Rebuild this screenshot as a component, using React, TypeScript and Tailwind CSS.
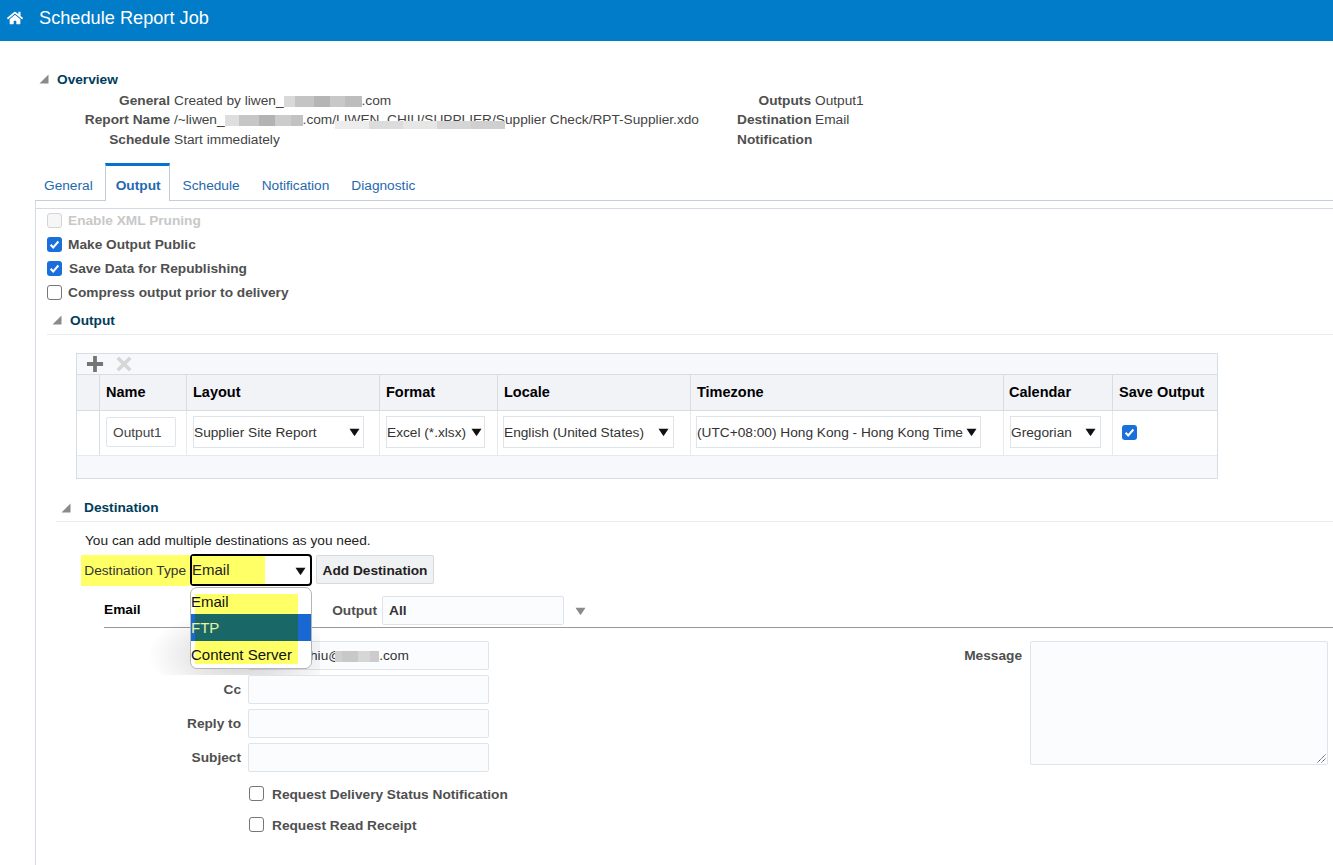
import type { ReactNode } from "react";
import { FaHome } from "react-icons/fa";

const FONT = "font-['Liberation_Sans',Arial,sans-serif]";

function SectionArrow() {
  return (
    <svg width="10" height="10" viewBox="0 0 10 10" className="shrink-0">
      <polygon points="9.5,0.5 9.5,9.5 0.5,9.5" fill="#8a8a8a" />
    </svg>
  );
}

function Caret({ color = "#111" }: { color?: string }) {
  return (
    <svg width="11" height="8" viewBox="0 0 11 8" className="shrink-0">
      <path d="M0.5 0.8h10L6 7.6a.6.6 0 0 1-1 0z" fill={color} />
    </svg>
  );
}

function Smudge({ cells }: { cells: [number, string][] }) {
  return (
    <span className="inline-flex h-[11px] align-[-2px]">
      {cells.map(([w, c], i) => (
        <span key={i} className="block h-full" style={{ width: w, background: c }} />
      ))}
    </span>
  );
}

function Checkbox({ state = "off" }: { state?: "on" | "off" | "disabled" }) {
  if (state === "on") {
    return (
      <span className="flex h-[15px] w-[15px] shrink-0 items-center justify-center rounded-[3px] bg-[#1a6fdc]">
        <svg width="11" height="11" viewBox="0 0 11 11">
          <path d="M1.6 5.8l2.6 2.7 5.2-6" fill="none" stroke="#fff" strokeWidth="2" />
        </svg>
      </span>
    );
  }
  return (
    <span
      className={
        state === "disabled"
          ? "block h-[15px] w-[15px] shrink-0 rounded-[3px] border border-[#d4d4d4] bg-[#f6f6f6]"
          : "block h-[15px] w-[15px] shrink-0 rounded-[3px] border border-[#767676] bg-white"
      }
    />
  );
}

function CheckRow({ label, state, gap, muted }: { label: string; state?: "on" | "off" | "disabled"; gap: string; muted?: boolean }) {
  return (
    <div className={`flex h-6 items-center pl-[11px] ${gap}`}>
      <Checkbox state={state} />
      <span className={muted ? "pt-[2px] text-[13.7px] font-bold text-[#c8c8c8]" : "pt-[2px] text-[13.7px] font-bold text-[#4f4f4f]"}>{label}</span>
    </div>
  );
}

function SectionTitle({ children, className }: { children: ReactNode; className: string }) {
  return (
    <div className={`flex items-center border-b border-[#e8ebef] ${className}`}>
      <SectionArrow />
      <span className="pt-[2px] text-[13.7px] font-bold text-[#003d5b]">{children}</span>
    </div>
  );
}

function Select({ label, className }: { label: string; className: string }) {
  return (
    <div className={`flex h-8 items-center justify-between border border-[#dfe4ea] bg-white text-[13.7px] text-[#333] ${className}`}>
      <span className="pt-[2px] whitespace-nowrap">{label}</span>
      <Caret />
    </div>
  );
}

function Th({ children, className = "" }: { children?: ReactNode; className?: string }) {
  return (
    <div className={`flex items-center border-r border-b border-[#d6dde5] bg-[#f1f3f7] text-[14.5px] font-bold text-black ${className}`}>
      {children}
    </div>
  );
}

function Td({ children, className = "" }: { children?: ReactNode; className?: string }) {
  return <div className={`flex items-center border-r border-[#e6eaef] bg-white pb-[2px] ${className}`}>{children}</div>;
}

function Field({ label, children }: { label?: string; children?: ReactNode }) {
  return (
    <div className="flex h-[29px] items-center">
      <span className="w-[144px] pt-[2px] pr-[7px] text-right text-[13.7px] font-bold text-[#4f4f4f]">{label}</span>
      <div className="flex h-[29px] w-[241px] items-center rounded-[2px] border border-[#dfe4ea] bg-[#fbfcfe] pt-[2px] pl-[7px] text-[13.7px] text-[#333]">
        {children}
      </div>
    </div>
  );
}

function InfoRow({ label, labelWidth, children, h }: { label: string; labelWidth: string; children?: ReactNode; h: string }) {
  return (
    <div className={`flex items-center pt-[2px] text-[13.7px] ${h}`}>
      <span className={`${labelWidth} shrink-0 text-right font-bold whitespace-nowrap text-[#4f4f4f]`}>{label}</span>
      <span className="ml-1 whitespace-nowrap text-[#444]">{children}</span>
    </div>
  );
}

export default function App() {
  return (
    <div className={`h-[865px] w-[1333px] overflow-hidden bg-white ${FONT}`}>
      <header className="flex h-[41px] items-start bg-[#007cc8] pl-[7px] pt-[6px] text-white">
        <FaHome className="mt-[4px]" size={16} />
        <span className="ml-[16px] text-[18.2px] leading-[25px]">Schedule Report Job</span>
      </header>

      <section className="pt-[28px]">
        <div className="flex h-5 items-center gap-[8px] pl-[39px]">
          <SectionArrow />
          <span className="pt-[2px] text-[13.7px] font-bold text-[#003d5b]">Overview</span>
        </div>
        <div className="mt-[1px] flex">
          <div className="w-[737px] shrink-0">
            <InfoRow label="General" labelWidth="w-[170px]" h="h-[20px]">
              Created by liwen_
              <Smudge cells={[[11, "#d9d9d9"], [19, "#c4c4c4"], [16, "#b5b5b5"], [15, "#c8c8c8"], [17, "#bdbdbd"]]} />
              .com
            </InfoRow>
            <InfoRow label="Report Name" labelWidth="w-[170px]" h="h-[19px]">
              /~liwen_
              <Smudge cells={[[14, "#dedede"], [20, "#c6c6c6"], [16, "#b3b3b3"], [16, "#cccccc"], [12, "#c2c2c2"]]} />
              .com
              <span className="relative inline-block">
                /LIWEN_CHIU/SUPPLIER/S
                <span className="absolute right-0 bottom-[2px] left-[3px] flex h-[8px]">
                  <span className="block h-full flex-1 bg-[#ececec]" />
                  <span className="block h-full flex-1 bg-[#dcdcdc]" />
                  <span className="block h-full flex-1 bg-[#e6e6e6]" />
                  <span className="block h-full flex-1 bg-[#d5d5d5]" />
                  <span className="block h-full flex-1 bg-[#cfcfcf]" />
                </span>
              </span>
              upplier Check/RPT-Supplier.xdo
            </InfoRow>
            <InfoRow label="Schedule" labelWidth="w-[170px]" h="h-[20px]">
              Start immediately
            </InfoRow>
          </div>
          <div>
            <InfoRow label="Outputs" labelWidth="w-[74px]" h="h-[20px]">Output1</InfoRow>
            <InfoRow label="Destination" labelWidth="w-[74px]" h="h-[19px]">Email</InfoRow>
            <InfoRow label="Notification" labelWidth="w-[74px]" h="h-[20px]" />
          </div>
        </div>
      </section>

      <nav className="mt-[14px] ml-[35px] flex h-[38px] items-stretch border-b border-[#c4cdda] text-[13.7px] text-[#1f69ae]">
        <span className="flex items-center pt-[9px] pl-[9px] pr-[12px]">General</span>
        <span className="-mb-px flex items-center border-x border-t-[3px] border-x-[#c4cdda] border-t-[#0572ce] bg-white pl-[10px] pr-[8px] pt-[5px] font-bold">
          Output
        </span>
        <span className="flex items-center pt-[9px] pl-[13px] pr-[11px]">Schedule</span>
        <span className="flex items-center pt-[9px] px-[11px]">Notification</span>
        <span className="flex items-center pt-[9px] px-[11px]">Diagnostic</span>
      </nav>

      <main className="ml-[35px] h-[664px] border-l border-[#d3dae4] pt-[7px]">
        <div className="border-t border-[#d3dae4]">
          <div className="-mt-px">
            <CheckRow label="Enable XML Pruning" state="disabled" gap="gap-[6px]" muted />
          </div>
          <CheckRow label="Make Output Public" state="on" gap="gap-[6px]" />
          <CheckRow label="Save Data for Republishing" state="on" gap="gap-[7px]" />
          <CheckRow label="Compress output prior to delivery" state="off" gap="gap-[6px]" />

          <SectionTitle className="mt-[4px] ml-[11px] h-[27px] gap-[8px] pl-[5px] pb-[2px]">Output</SectionTitle>

          {/* output table */}
          <div className="mt-[18px] ml-[40px] w-[1142px] border border-[#d6dde5] bg-[#f6f8fb]">
            <div className="flex h-[20px] items-center gap-[11px] pl-[9px]">
              <svg width="18" height="18" viewBox="0 0 19 19">
                <path d="M7.5 1h4v6.5H18v4h-6.5V18h-4v-6.5H1v-4h6.5z" fill="#757575" />
              </svg>
              <svg width="18" height="18" viewBox="0 0 19 19">
                <path d="M1.5 4.2l2.700-2.700L9.500 6.800l5.300-5.300 2.700 2.700-5.300 5.300 5.300 5.300-2.700 2.700-5.300-5.300-5.300 5.300-2.700-2.700 5.300-5.300z" fill="#d6d6d6" />
              </svg>
            </div>
            <div className="grid grid-cols-[23px_87px_193px_118px_193px_313px_109px_104px] border-t border-[#d6dde5]">
              <Th className="h-[36px]" />
              <Th className="pl-[6px]">Name</Th>
              <Th className="pl-[6px]">Layout</Th>
              <Th className="pl-[6px]">Format</Th>
              <Th className="pl-[6px]">Locale</Th>
              <Th className="pl-[6px]">Timezone</Th>
              <Th className="pl-[5px]">Calendar</Th>
              <Th className="border-r-0 pl-[6px]">Save Output</Th>
              <Td className="h-[44px] border-r-[#d6dde5] bg-[#f6f8fb]" />
              <Td className="pl-[6px]">
                <div className="flex h-[30px] w-[70px] items-center rounded-[2px] border border-[#dfe4ea] pt-[2px] pl-[6px] text-[13.7px] text-[#444]">Output1</div>
              </Td>
              <Td className="pl-[6px]"><Select label="Supplier Site Report" className="w-[171px] pr-[3px]" /></Td>
              <Td className="pl-[6px]"><Select label="Excel (*.xlsx)" className="w-[99px] pr-[2px]" /></Td>
              <Td className="pl-[5px]"><Select label="English (United States)" className="w-[171px] pr-[4px]" /></Td>
              <Td className="pl-[5px]"><Select label="(UTC+08:00) Hong Kong - Hong Kong Time" className="w-[285px] pr-[3px]" /></Td>
              <Td className="pl-[6px]"><Select label="Gregorian" className="w-[91px] pr-[4px]" /></Td>
              <Td className="border-r-0 pl-[9px]"><Checkbox state="on" /></Td>
            </div>
            <div className="h-[23px] border-t border-[#e6eaef]" />
          </div>

          {/* destination */}
          <SectionTitle className="mt-[15px] ml-[20px] h-[28px] gap-[13px] pl-[5px]">Destination</SectionTitle>
          <p className="ml-[49px] mt-[9px] h-[19px] text-[13.7px] leading-[20px] text-[#222]">You can add multiple destinations as you need.</p>

          <div className="relative ml-[45px] mt-[4px] flex h-[32px] items-center">
            <span className="flex h-[31px] w-[109px] items-center justify-end bg-[#ffff66] pt-[2px] pr-[4px] text-[13.7px] whitespace-nowrap text-[#333]">
              Destination Type
            </span>
            <div className="relative h-[32px] w-[122px] rounded-[4px] border-2 border-black bg-white">
              <div className="flex h-full w-[73px] items-center bg-[#ffff66] pt-[1px] text-[15px] text-[#222]">Email</div>
              <div className="absolute top-[11px] right-[4px]"><Caret /></div>

              <div className="absolute top-[53px] -left-[42px] h-[66px] w-[170px] bg-[radial-gradient(ellipse_at_55%_70%,rgba(0,0,0,0.2),transparent_72%)]" />
              <div className="absolute top-[31px] -left-[2px] z-10 h-[82px] w-[122px] overflow-hidden rounded-[7px] border border-[#b5b5b5] bg-white text-[15px] text-[#111]">
                <div className="absolute top-[6px] left-[4px] h-[70px] w-[103px] bg-[#ffff66]" />
                <div className="absolute top-[26px] h-[27px] w-full bg-[#1967d2]" />
                <div className="absolute top-[26px] left-[4px] h-[27px] w-[103px] bg-[#1a6767]" />
                <div className="relative flex h-[26px] items-end pb-[1px]">Email</div>
                <div className="relative flex h-[27px] items-center pt-[2px] text-[#e9f59a]">FTP</div>
                <div className="relative flex h-[27px] items-center pt-[1px]">Content Server</div>
              </div>
            </div>
            <button className="-mt-px ml-[4px] h-[29px] w-[118px] rounded-[2px] border border-[#d5dae0] bg-[#f0f1f3] pt-[3px] text-[13.7px] font-bold text-[#222]">
              Add Destination
            </button>
          </div>

          <div className="mt-[10px] ml-[68px] flex h-[32px] items-start border-b border-[#999]">
            <span className="flex h-[29px] w-[228px] items-center text-[13.7px] font-bold text-black">Email</span>
            <span className="flex h-[29px] w-[45px] items-center justify-end pt-[2px] text-[13.7px] font-bold text-[#4f4f4f]">Output</span>
            <div className="ml-[5px] flex h-[29px] w-[182px] items-center rounded-[2px] border border-[#dfe4ea] bg-[#fbfcfe] pt-[2px] pl-[6px] text-[13.7px] font-bold text-[#333]">All</div>
            <div className="ml-[11px] mt-[11px]"><Caret color="#8a8a8a" /></div>
          </div>

          <div className="mt-[13px] ml-[68px] flex">
            <div className="w-[786px] shrink-0">
              <div className="flex flex-col gap-[5px]">
                <Field>
                  <span className="pl-[54px] whitespace-nowrap">
                    hiu@
                    <span className="-ml-[7px] inline-block">
                      <Smudge cells={[[7, "#cfcfcf"], [16, "#c8c8c8"], [12, "#d6d6d6"], [9, "#cccccc"]]} />
                    </span>
                    .com
                  </span>
                </Field>
                <Field label="Cc" />
                <Field label="Reply to" />
                <Field label="Subject" />
              </div>
              <div className="mt-[14px] ml-[145px] flex h-[15px] items-center gap-[8px]">
                <Checkbox />
                <span className="pt-[4px] text-[13.7px] font-bold text-[#4f4f4f]">Request Delivery Status Notification</span>
              </div>
              <div className="mt-[16px] ml-[145px] flex h-[15px] items-center gap-[8px]">
                <Checkbox />
                <span className="pt-[4px] text-[13.7px] font-bold text-[#4f4f4f]">Request Read Receipt</span>
              </div>
            </div>
            <div className="flex">
              <span className="w-[132px] pt-[5px] text-right text-[13.7px] font-bold text-[#4f4f4f]">Message</span>
              <div className="relative ml-[8px] h-[124px] w-[298px] rounded-[2px] border border-[#dfe4ea] bg-[#fbfcfe]">
                <svg width="9" height="9" viewBox="0 0 9 9" className="absolute right-[1px] bottom-[1px]">
                  <path d="M0.500 8.500L8.500 0.500M4.500 8.500L8.500 4.500" stroke="#555" strokeWidth="1" strokeDasharray="1.500 .5" />
                </svg>
              </div>
            </div>
          </div>
        </div>
      </main>
    </div>
  );
}
